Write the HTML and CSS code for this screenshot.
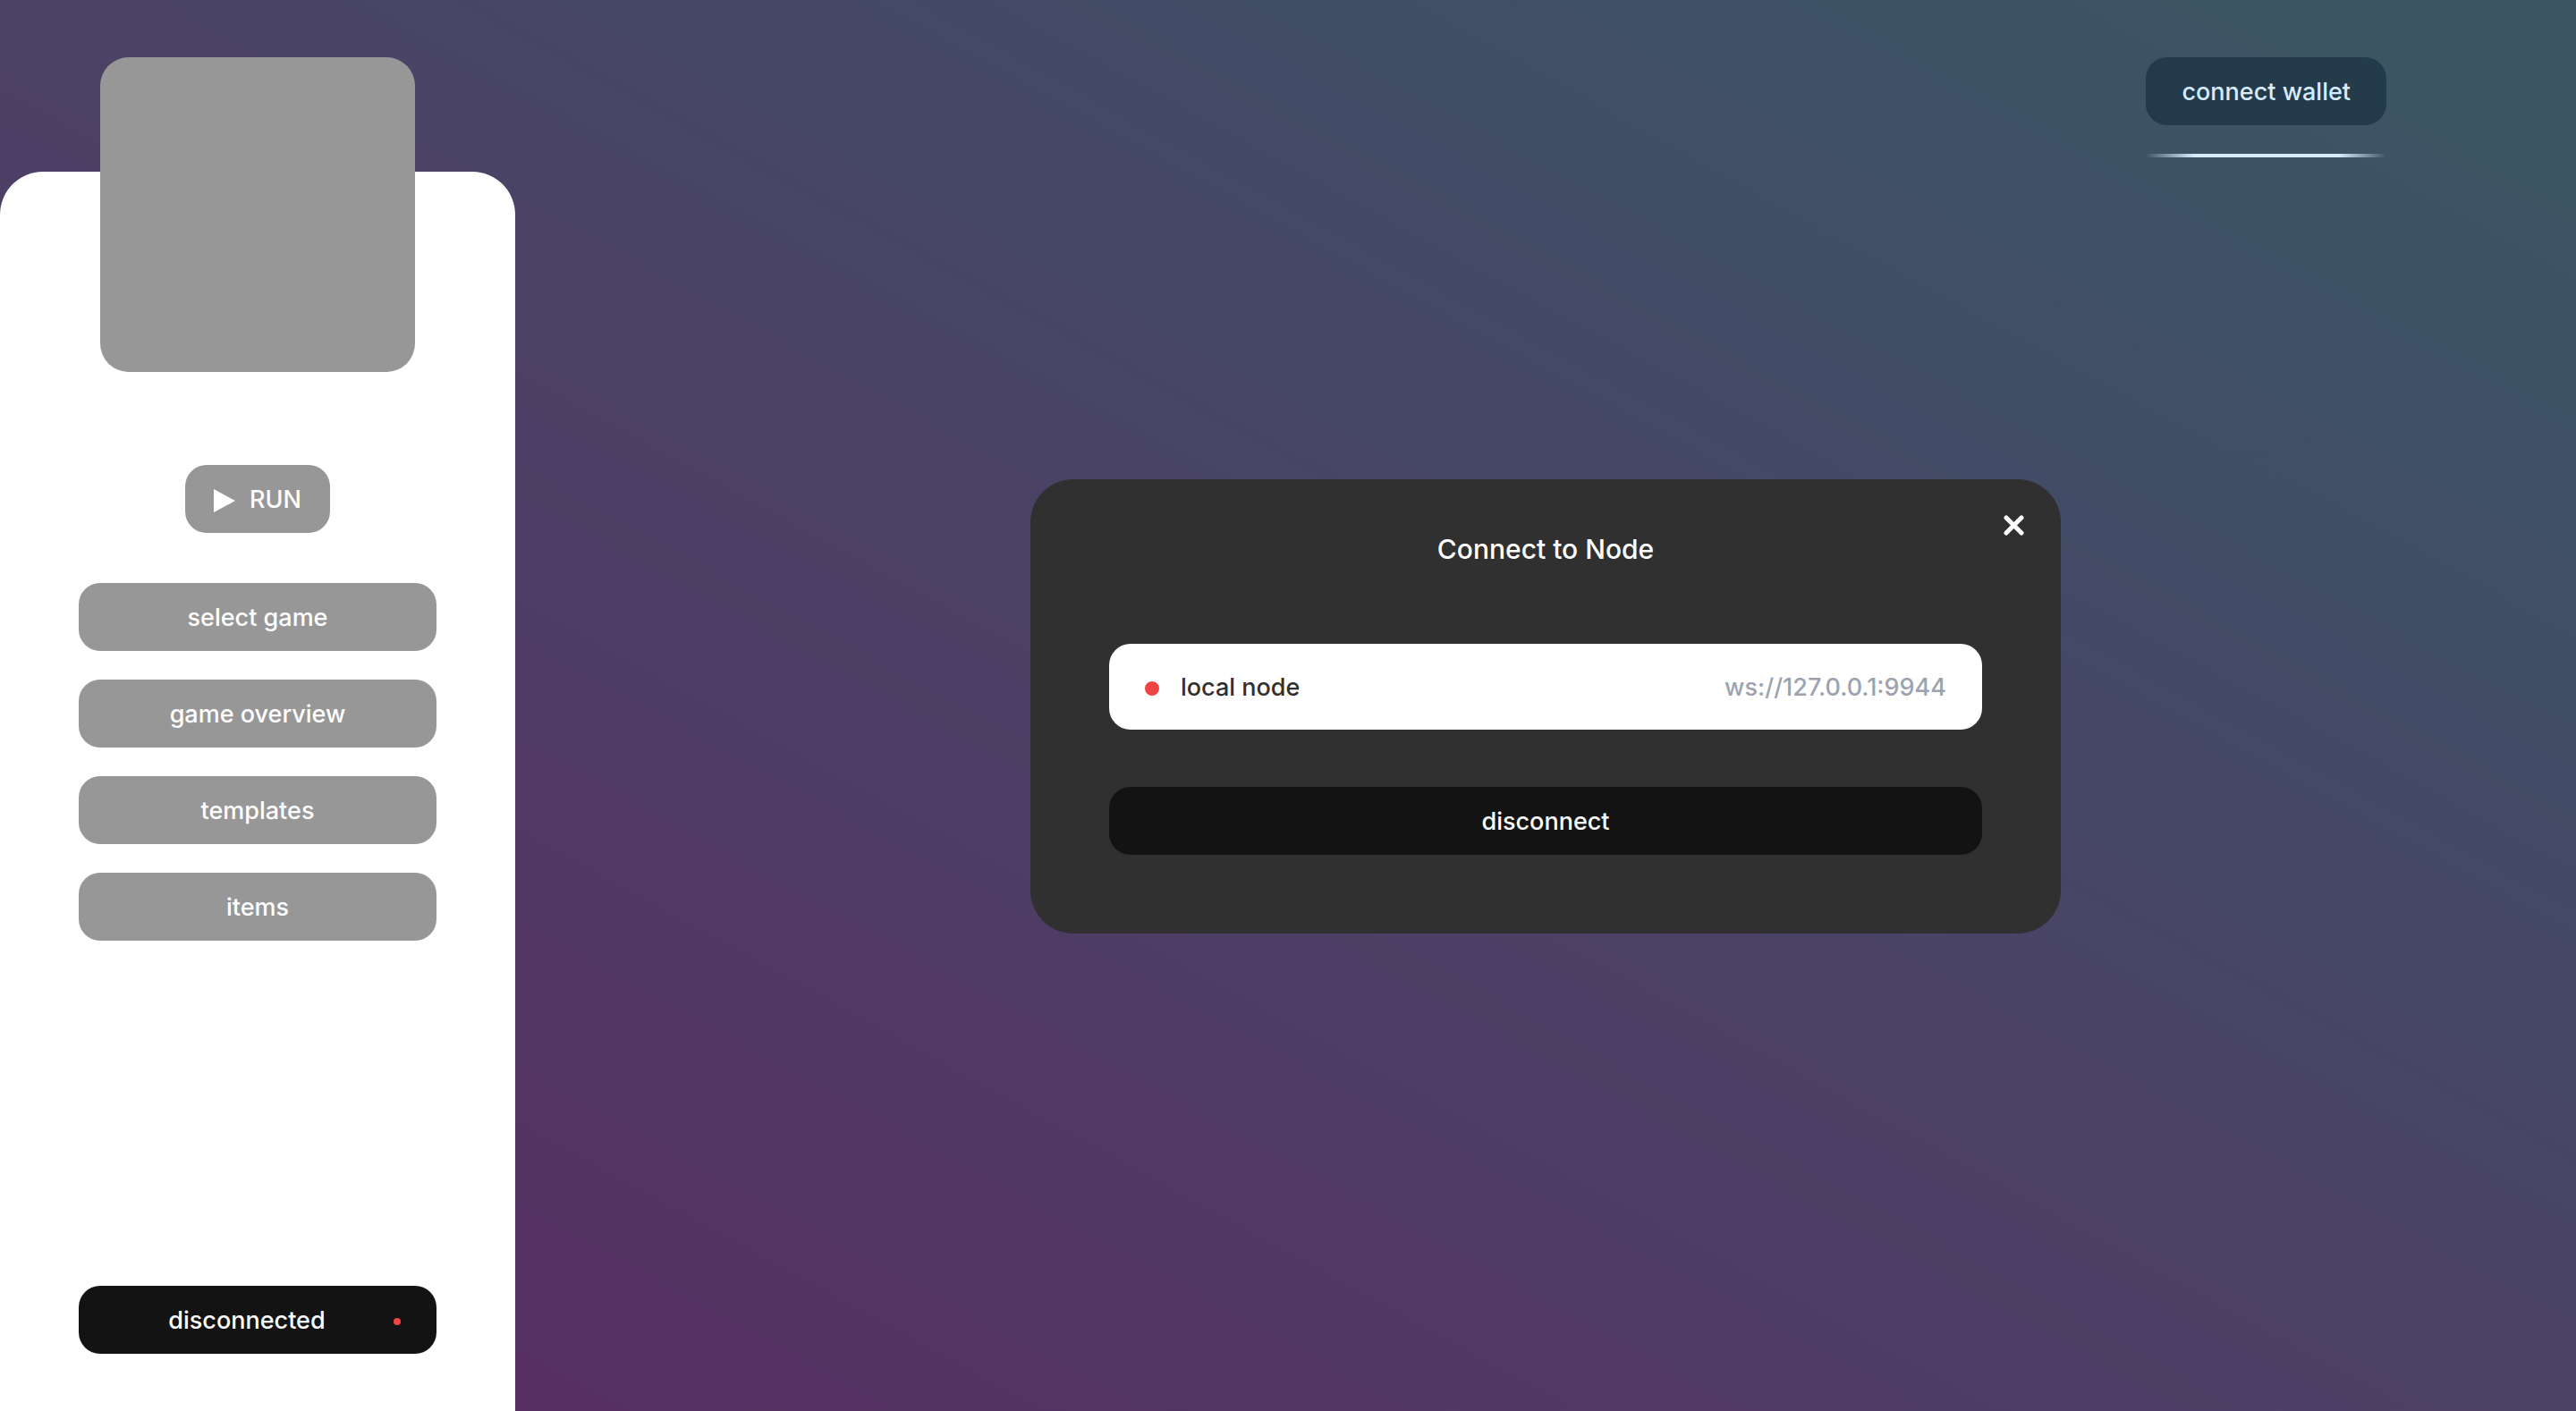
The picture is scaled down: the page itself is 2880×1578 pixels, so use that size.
FILE: index.html
```html
<!DOCTYPE html>
<html lang="en">
<head>
<meta charset="utf-8">
<meta name="viewport" content="width=device-width, initial-scale=1">
<title>Connect to Node</title>
<link rel="stylesheet" href="styles.css">
</head>
<body>
<div class="app">
  <aside class="sidebar">
    <div class="panel">
      <div class="logo"></div>
      <button class="button button-run" type="button">
        <svg class="play" viewBox="0 0 24 28" aria-hidden="true"><path d="M0 1 24 14 0 27Z" fill="currentColor"/></svg>
        RUN
      </button>
      <nav class="menu">
        <button class="button" type="button">select game</button>
        <button class="button" type="button">game overview</button>
        <button class="button" type="button">templates</button>
        <button class="button" type="button">items</button>
      </nav>
      <button class="button button-dark button-status" type="button">
        <span class="status-label">disconnected</span>
        <span class="dot dot-small"></span>
      </button>
    </div>
  </aside>
  <main class="main">
    <header class="header">
      <div class="wallet">
        <button class="button button-wallet" type="button">connect wallet</button>
        <div class="wallet-line"></div>
      </div>
    </header>
    <div class="overlay">
      <section class="modal" role="dialog" aria-labelledby="modal-title">
        <button class="close" type="button" aria-label="Close">
          <svg class="close-icon" viewBox="0 0 24 24" aria-hidden="true"><path d="M3 3 20 20M20 3 3 20" stroke="currentColor" stroke-width="5" stroke-linecap="round"/></svg>
        </button>
        <h1 class="modal-title" id="modal-title">Connect to Node</h1>
        <button class="node" type="button">
          <span class="dot"></span>
          <span class="node-name">local node</span>
          <span class="node-url">ws://127.0.0.1:9944</span>
        </button>
        <button class="button button-dark" type="button">disconnect</button>
      </section>
    </div>
  </main>
</div>
</body>
</html>
```
FILE: styles.css
```css
* {
  box-sizing: border-box;
}

body {
  margin: 0;
  font-family: Inter, "Liberation Sans", sans-serif;
  font-size: 27px;
  font-weight: 500;
  line-height: 36px;
  color: #fff;
}

button {
  border: 0;
  font: inherit;
  color: inherit;
  cursor: pointer;
}

.app {
  display: grid;
  grid-template-columns: 1fr 4fr;
  min-height: 100vh;
  background: linear-gradient(to top right, #5a2b62, #4c4065 47%, #3e5166 84%, #3c5562 94%, #3b5761);
}

.sidebar {
  display: flex;
  padding-top: 192px;
}

.panel {
  flex: 1;
  display: flex;
  flex-direction: column;
  align-items: center;
  padding: 0 88px 64px;
  border-radius: 48px 48px 0 0;
  background: #fff;
}

.logo {
  width: 352px;
  height: 352px;
  margin-top: -128px;
  border-radius: 32px;
  background: #979797;
}

.button {
  display: flex;
  align-items: center;
  justify-content: center;
  width: 100%;
  padding: 21px 40px 19px;
  border-radius: 24px;
  background: #979797;
}

.button-run {
  gap: 16px;
  width: auto;
  margin: 104px 0 56px;
  padding: 21px 32px 19px;
}

.play {
  width: 24px;
  height: 28px;
  margin-top: 2px;
}

.menu {
  display: flex;
  flex-direction: column;
  gap: 32px;
  width: 100%;
}

.button-dark {
  background: #131313;
}

.button-status {
  gap: 16px;
  margin-top: auto;
}

.status-label {
  flex: 1;
}

.dot {
  width: 16px;
  height: 16px;
  margin-top: 2px;
  border-radius: 50%;
  background: #ef4444;
}

.dot-small {
  width: 8px;
  height: 8px;
}

.main {
  display: flex;
  flex-direction: column;
  position: relative;
}

.header {
  display: flex;
  justify-content: flex-end;
  padding: 64px 212px 0;
}

.wallet {
  display: flex;
  flex-direction: column;
  gap: 32px;
}

.button-wallet {
  background: rgba(10, 34, 50, 0.5);
  color: #d6edff;
}

.wallet-line {
  height: 4px;
  background: linear-gradient(to right, transparent, #d6edff 20%, #d6edff 80%, transparent);
}

.overlay {
  position: absolute;
  inset: 0;
  display: flex;
  align-items: center;
  justify-content: center;
  padding-top: 2px;
  pointer-events: none;
}

.modal {
  position: relative;
  display: flex;
  flex-direction: column;
  width: 50%;
  padding: 58px 88px 88px;
  border-radius: 48px;
  background: #303030;
  pointer-events: auto;
}

.modal-title {
  margin: 0 0 86px;
  font-size: 30px;
  font-weight: 500;
  line-height: 40px;
  text-align: center;
}

.close {
  position: absolute;
  top: 40px;
  right: 40px;
  display: flex;
  padding: 0;
  background: none;
}

.close-icon {
  width: 24px;
  height: 24px;
}

.node {
  display: flex;
  align-items: center;
  gap: 24px;
  margin-bottom: 64px;
  padding: 31px 40px 29px;
  border-radius: 24px;
  background: #fff;
  color: #303030;
}

.node-url {
  margin-left: auto;
  color: #9ca3af;
}
```
